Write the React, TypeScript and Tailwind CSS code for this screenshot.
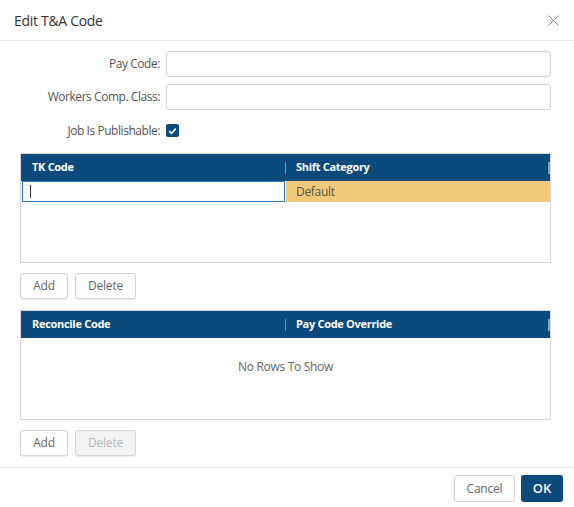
import React from 'react';

const FONT = { fontFamily: '"Open Sans", "Noto Sans", Arial, sans-serif' };

const GridHeader: React.FC<{ left: string; right: string }> = ({ left, right }) => (
  <div className="flex h-[27px] items-center bg-[#0b4a7a] text-[11px] font-bold tracking-[-0.3px] text-white">
    <div className="flex h-full w-[265px] items-center justify-between pl-[11px]">
      <span>{left}</span>
      <span className="h-[12px] w-px bg-white/40" />
    </div>
    <div className="flex h-full flex-1 items-center justify-between pl-[10px]">
      <span>{right}</span>
      <span className="h-[12px] w-[2px] bg-white/50" />
    </div>
  </div>
);

const GridButton: React.FC<{ label: string; width: string; disabled?: boolean }> = ({ label, width, disabled }) => (
  <button
    type="button"
    className={`h-[26px] ${width} rounded-[3px] border border-[#d4d4d4] text-[12px] tracking-[-0.2px] shadow-[0_1px_1px_rgba(0,0,0,0.08)] ${
      disabled ? 'bg-[#f2f2f2] text-[#b8b8b8]' : 'bg-white text-[#666]'
    }`}
  >
    {label}
  </button>
);

export default function App() {
  return (
    <div className="h-[507px] w-[574px] bg-white text-[#333]" style={FONT}>
      <div className="flex h-[41px] items-center justify-between border-b border-[#e2e2e2] pl-[14px] pr-[14px]">
        <h1 className="text-[14px] tracking-[-0.3px] text-[#333]">Edit T&amp;A Code</h1>
        <svg width="11" height="11" viewBox="0 0 11 11" className="mr-[1px]">
          <path d="M0.5 0.5 L10.5 10.5 M10.5 0.5 L0.5 10.5" stroke="#888" strokeWidth="1" fill="none" />
        </svg>
      </div>

      <div className="px-[20px] pt-[10px]">
        <div className="grid grid-cols-[140px_1fr] items-center gap-x-[6px] gap-y-[7px] pr-[3px] text-[12px] tracking-[-0.45px] text-[#555]">
          <label className="text-right">Pay Code:</label>
          <input className="h-[26px] rounded-[3px] border border-[#d6d6d6] outline-none" />
          <label className="text-right">Workers Comp. Class:</label>
          <input className="h-[26px] rounded-[3px] border border-[#d6d6d6] outline-none" />
        </div>
        <div className="mt-[14px] grid grid-cols-[140px_1fr] items-center gap-x-[6px] text-[12px] tracking-[-0.45px] text-[#555]">
          <label className="text-right leading-[13px]">Job Is Publishable:</label>
          <span className="flex h-[13px] w-[13px] items-center justify-center rounded-[2px] bg-[#0b4a7a]">
            <svg width="9" height="8" viewBox="0 0 9 8">
              <path d="M1.2 4.2 L3.5 6.3 L7.8 1.6" stroke="white" strokeWidth="1.6" fill="none" />
            </svg>
          </span>
        </div>

        <div className="mt-[16px] h-[110px] w-[531px] border border-[#d9d9d9]">
          <GridHeader left="TK Code" right="Shift Category" />
          <div className="flex h-[21px] text-[12px]">
            <div className="w-[265px] px-[1px]">
              <div className="flex h-full items-center border border-[#2a7dd1] pl-[7px]">
                <span className="h-[13px] w-px bg-[#333]" />
              </div>
            </div>
            <div className="flex flex-1 items-center bg-[#f0ca78] pl-[10px] tracking-[-0.3px] text-[#555]">Default</div>
          </div>
        </div>

        <div className="mt-[10px] flex gap-[7px]">
          <GridButton label="Add" width="w-[48px]" />
          <GridButton label="Delete" width="w-[61px]" />
        </div>

        <div className="mt-[11px] flex h-[110px] w-[531px] flex-col border border-[#d9d9d9]">
          <GridHeader left="Reconcile Code" right="Pay Code Override" />
          <div className="flex flex-1 items-start justify-center pt-[20px] text-[12px] tracking-[-0.3px] text-[#666]">
            No Rows To Show
          </div>
        </div>

        <div className="mt-[10px] flex gap-[7px]">
          <GridButton label="Add" width="w-[48px]" />
          <GridButton label="Delete" width="w-[61px]" disabled />
        </div>
      </div>

      <div className="mt-[11px] flex justify-end gap-[6px] border-t border-[#e2e2e2] pr-[11px] pt-[7px]">
        <button
          type="button"
          className="h-[27px] w-[61px] rounded-[3px] border border-[#d4d4d4] bg-white text-[12px] tracking-[-0.2px] text-[#666]"
        >
          Cancel
        </button>
        <button type="button" className="h-[27px] w-[42px] rounded-[3px] bg-[#0b4a7a] text-[13px] font-semibold text-white">
          OK
        </button>
      </div>
    </div>
  );
}
